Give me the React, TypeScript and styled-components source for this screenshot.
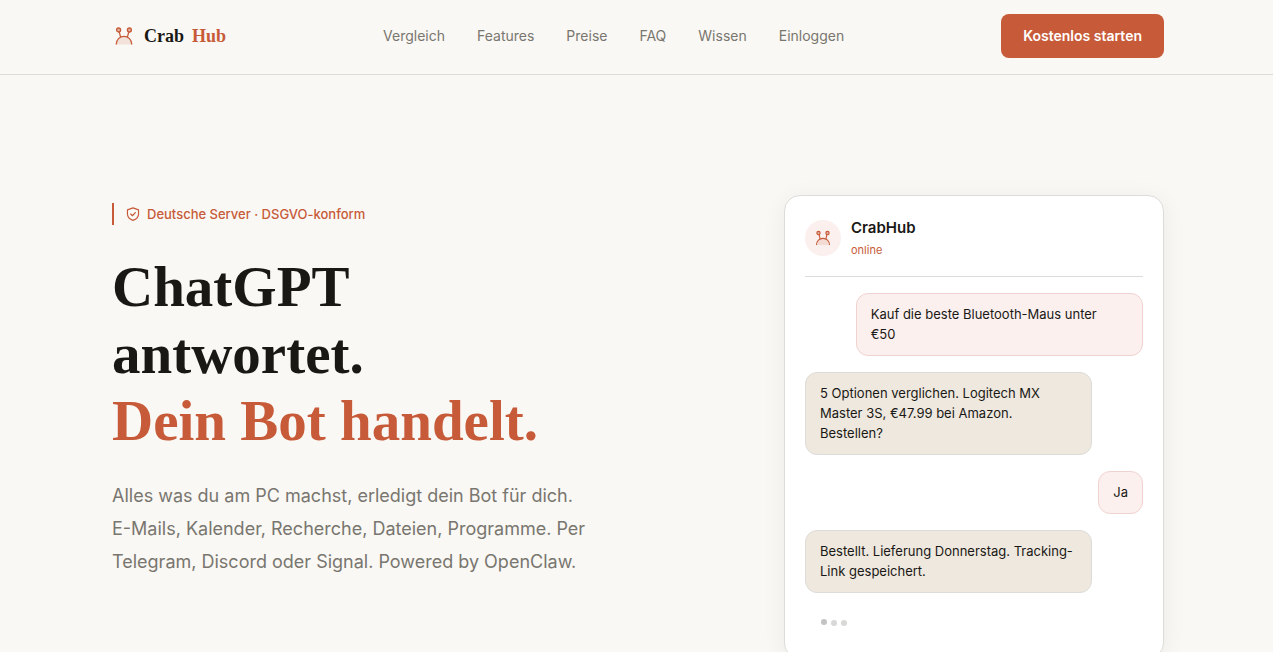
import React from "react";
import styled, { createGlobalStyle } from "styled-components";

const sans = `Inter, "Liberation Sans", sans-serif`;
const serif = `"Liberation Serif", "Times New Roman", serif`;

const color = {
  page: "#faf8f4",
  ink: "#1a1814",
  muted: "#78766f",
  brand: "#c75b39",
  blush: "#fbf0ee",
  blushLine: "#f0d3d0",
  sand: "#eee8df",
  line: "#dddcd8",
};

const GlobalStyle = createGlobalStyle`
  *, *::before, *::after { box-sizing: border-box; }
  body {
    margin: 0;
    background: ${color.page};
    color: ${color.ink};
    font-family: ${sans};
  }
  h1, h2, p { margin: 0; }
`;

const Header = styled.header`
  border-bottom: 1px solid ${color.line};
`;

const Container = styled.div`
  max-width: 1103px;
  margin: 0 auto;
  padding: 0 24px 0 27px;
`;

const Bar = styled(Container)`
  display: flex;
  align-items: center;
  justify-content: space-between;
  padding-top: 14px;
  padding-bottom: 16px;
`;

const Logo = styled.a`
  display: flex;
  align-items: center;
  gap: 8px;
  font: 700 18px/24px ${serif};
  color: ${color.ink};
  text-decoration: none;
`;

const LogoAccent = styled.span`
  color: ${color.brand};
`;

const Nav = styled.nav`
  display: flex;
  gap: 32px;
`;

const NavLink = styled.a`
  font-size: 14px;
  line-height: 20px;
  color: ${color.muted};
  text-decoration: none;
`;

const CtaButton = styled.button`
  height: 44px;
  padding: 0 22px;
  border: 0;
  border-radius: 8px;
  background: ${color.brand};
  color: #fff;
  font: 600 14px/20px ${sans};
  cursor: pointer;
`;

const Hero = styled(Container)`
  display: grid;
  grid-template-columns: minmax(0, 1fr) 380px;
  align-items: start;
  gap: 64px;
  padding-top: 120px;
  padding-bottom: 120px;
`;

const Copy = styled.div`
  padding-top: 8px;
`;

const Badge = styled.div`
  display: flex;
  align-items: center;
  gap: 7px;
  margin-bottom: 28px;
  padding-left: 12px;
  border-left: 2px solid ${color.brand};
  color: ${color.brand};
  font-size: 13px;
  font-weight: 500;
  line-height: 22px;
`;

const Title = styled.h1`
  font: 700 57px/67px ${serif};
`;

const TitleLine = styled.span<{ $accent?: boolean }>`
  display: block;
  color: ${(p) => (p.$accent ? color.brand : "inherit")};
`;

const Lead = styled.p`
  max-width: 480px;
  margin-top: 25px;
  color: ${color.muted};
  font-size: 18px;
  line-height: 33px;
`;

const ChatCard = styled.section`
  padding: 20px;
  border: 1px solid ${color.line};
  border-radius: 16px;
  background: #fff;
  box-shadow: 0 4px 24px rgba(26, 24, 20, 0.06);
`;

const ChatHeader = styled.div`
  display: flex;
  align-items: center;
  gap: 10px;
  padding-bottom: 16px;
  border-bottom: 1px solid ${color.line};
`;

const Avatar = styled.div`
  display: grid;
  place-items: center;
  width: 36px;
  height: 36px;
  border-radius: 50%;
  background: ${color.blush};
`;

const BotName = styled.h2`
  font-size: 15px;
  font-weight: 600;
  line-height: 24px;
`;

const Status = styled.p`
  color: ${color.brand};
  font-size: 11px;
  line-height: 20px;
`;

const Messages = styled.div`
  display: flex;
  flex-direction: column;
  gap: 16px;
  padding-top: 16px;
`;

const Bubble = styled.p<{ $mine?: boolean; $long?: boolean }>`
  align-self: ${(p) => (p.$mine ? "flex-end" : "flex-start")};
  width: ${(p) => (p.$long ? "85%" : "auto")};
  padding: 10px 14px 11px;
  border: 1px solid ${(p) => (p.$mine ? color.blushLine : color.line)};
  border-radius: 12px;
  background: ${(p) => (p.$mine ? color.blush : color.sand)};
  font-size: 13px;
  line-height: 20px;
  white-space: pre-line;
`;

const Typing = styled.div`
  display: flex;
  gap: 4px;
  padding: 10px 16px 12px;
`;

const Dot = styled.span<{ $raised?: boolean }>`
  width: 6px;
  height: 6px;
  margin-top: ${(p) => (p.$raised ? "0" : "1px")};
  border-radius: 50%;
  background: ${(p) => (p.$raised ? "#c4c3c1" : "#d8d8d6")};
`;

const CrabIcon = ({ size }: { size: number }) => (
  <svg width={size} height={size} viewBox="0 0 24 24" fill="none" stroke={color.brand} strokeWidth="1.3" aria-hidden="true">
    <path d="M4.2 20.5C4.2 15.6 7.8 12.4 12 12.4S19.800 15.600 19.800 20.500Z" fill={color.brand} fillOpacity="0.14" stroke="none" />
    <path d="M4.200 20.500C4.200 15.600 7.800 12.400 12 12.400S19.800 15.600 19.800 20.500" />
    <path d="M7.200 7.800 8.600 13.200M16.800 7.800 15.400 13.200" />
    <circle cx="6.600" cy="6" r="2" fill={color.brand} fillOpacity="0.45" />
    <circle cx="17.400" cy="6" r="2" fill={color.brand} fillOpacity="0.45" />
  </svg>
);

const ShieldIcon = () => (
  <svg width="14" height="14" viewBox="0 0 24 24" fill="none" stroke={color.brand} strokeWidth="2" strokeLinecap="round" strokeLinejoin="round" aria-hidden="true">
    <path d="M12 1.500 21.500 5v7c0 5.500-4 9-9.500 11-5.500-2-9.500-5.500-9.500-11V5Z" />
    <path d="m8 12 3 3 5-5.500" />
  </svg>
);

const links = ["Vergleich", "Features", "Preise", "FAQ", "Wissen", "Einloggen"];

const messages = [
  { mine: true, long: true, text: "Kauf die beste Bluetooth-Maus unter\n€50" },
  { mine: false, long: true, text: "5 Optionen verglichen. Logitech MX Master 3S, €47.99 bei Amazon. Bestellen?" },
  { mine: true, long: false, text: "Ja" },
  { mine: false, long: true, text: "Bestellt. Lieferung Donnerstag. Tracking-Link gespeichert." },
];

export default function App() {
  return (
    <>
      <GlobalStyle />
      <Header>
        <Bar>
          <Logo href="#">
            <CrabIcon size={24} />
            <span>Crab</span>
            <LogoAccent>Hub</LogoAccent>
          </Logo>
          <Nav>
            {links.map((l) => (
              <NavLink key={l} href="#">{l}</NavLink>
            ))}
          </Nav>
          <CtaButton type="button">Kostenlos starten</CtaButton>
        </Bar>
      </Header>
      <main>
        <Hero>
          <Copy>
            <Badge>
              <ShieldIcon />
              Deutsche Server · DSGVO-konform
            </Badge>
            <Title>
              <TitleLine>ChatGPT</TitleLine>
              <TitleLine>antwortet.</TitleLine>
              <TitleLine $accent>Dein Bot handelt.</TitleLine>
            </Title>
            <Lead>
              Alles was du am PC machst, erledigt dein Bot für dich. E-Mails, Kalender, Recherche, Dateien, Programme. Per Telegram, Discord oder Signal. Powered by OpenClaw.
            </Lead>
          </Copy>
          <ChatCard>
            <ChatHeader>
              <Avatar>
                <CrabIcon size={20} />
              </Avatar>
              <div>
                <BotName>CrabHub</BotName>
                <Status>online</Status>
              </div>
            </ChatHeader>
            <Messages>
              {messages.map((m) => (
                <Bubble key={m.text} $mine={m.mine} $long={m.long}>{m.text}</Bubble>
              ))}
              <Typing>
                <Dot $raised />
                <Dot />
                <Dot />
              </Typing>
            </Messages>
          </ChatCard>
        </Hero>
      </main>
    </>
  );
}
